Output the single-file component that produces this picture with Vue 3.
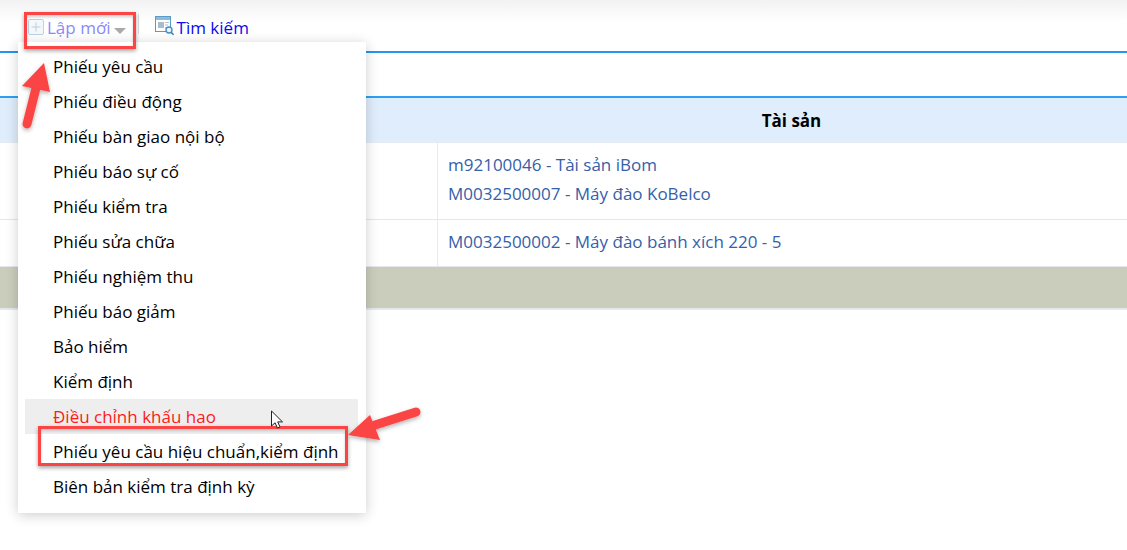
<script setup>
const items = [
  'Phiếu yêu cầu', 'Phiếu điều động', 'Phiếu bàn giao nội bộ', 'Phiếu báo sự cố',
  'Phiếu kiểm tra', 'Phiếu sửa chữa', 'Phiếu nghiệm thu', 'Phiếu báo giảm',
  'Bảo hiểm', 'Kiểm định', 'Điều chỉnh khấu hao', 'Phiếu yêu cầu hiệu chuẩn,kiểm định',
  'Biên bản kiểm tra định kỳ'
]
const hoverIndex = 10
</script>

<template>
  <div class="page">
    <div class="toolbar">
      <div class="new-btn">
        <svg class="plus" width="16" height="16" viewBox="0 0 16 16">
          <rect x="0.5" y="0.5" width="15" height="15" rx="1.5" fill="#f4f8fb" stroke="#bcd3e4" />
          <path d="M8 3.5v9M3.5 8h9" stroke="#bccfde" stroke-width="1" fill="none" />
        </svg>
        <span class="new-label">Lập mới</span>
        <span class="caret"></span>
      </div>
      <span class="sep"></span>
      <div class="search-btn">
        <svg width="20" height="20" viewBox="0 0 20 20">
          <rect x="0.5" y="0.5" width="15" height="15" fill="#fff" stroke="#5b9bc9" />
          <rect x="1" y="1" width="14" height="3" fill="#8dbbdc" />
          <rect x="3" y="6" width="6" height="6" fill="#a9bccb" />
          <path d="M10 6.5h4M10 9h3M10 11.5h2" stroke="#a9c4d8" />
          <circle cx="14" cy="14" r="3" fill="#eaf4fb" stroke="#4a8fc0" stroke-width="1.4" />
          <path d="M16 16.2l2.6 2.6" stroke="#3f7fae" stroke-width="1.6" />
        </svg>
        <span class="search-label">Tìm kiếm</span>
      </div>
    </div>

    <div class="tabline"></div>

    <div class="table">
      <div class="row head">
        <div class="cell first"></div>
        <div class="cell second">Tài sản</div>
      </div>
      <div class="row r1">
        <div class="cell first"></div>
        <div class="cell second links">
          <a>m92100046 - Tài sản iBom</a>
          <a>M0032500007 - Máy đào KoBelco</a>
        </div>
      </div>
      <div class="row r2">
        <div class="cell first"></div>
        <div class="cell second links">
          <a>M0032500002 - Máy đào bánh xích 220 - 5</a>
        </div>
      </div>
      <div class="footer-row"></div>
    </div>

    <ul class="menu">
      <li v-for="(item, i) in items" :key="item" :class="{ hover: i === hoverIndex }">{{ item }}</li>
    </ul>

    <div class="mark mark-top"></div>
    <div class="mark mark-item"></div>

    <svg class="cursor" width="16" height="20" viewBox="0 0 16 20">
      <path d="M1.5 1v15l3.6-3.2 2.3 5.2 2.6-1.1-2.3-5h4.8z" fill="#fff" stroke="#222" stroke-width="1" />
    </svg>

    <svg class="arrow arrow-up" width="60" height="100" viewBox="0 0 60 100">
      <defs>
        <filter id="sh1" x="-30%" y="-30%" width="160%" height="160%">
          <feDropShadow dx="0" dy="2" stdDeviation="2" flood-color="#000" flood-opacity="0.3" />
        </filter>
      </defs>
      <g filter="url(#sh1)">
        <path d="M27 84 L36 48" stroke="#fb4444" stroke-width="9" stroke-linecap="round" fill="none" />
        <path d="M44 23 L22 46 L50 52 Z" fill="#fb4444" />
      </g>
    </svg>

    <svg class="arrow arrow-left" width="90" height="60" viewBox="0 0 90 60">
      <defs>
        <filter id="sh2" x="-30%" y="-30%" width="160%" height="160%">
          <feDropShadow dx="0" dy="2" stdDeviation="2" flood-color="#000" flood-opacity="0.3" />
        </filter>
      </defs>
      <g filter="url(#sh2)">
        <path d="M76 14 L35 27" stroke="#fb4444" stroke-width="9" stroke-linecap="round" fill="none" />
        <path d="M8 37 L30 17 L40 42 Z" fill="#fb4444" />
      </g>
    </svg>
  </div>
</template>

<style>
body { margin: 0; background: #fff; }
</style>

<style scoped>
.page {
  position: relative;
  width: 1127px;
  height: 550px;
  overflow: hidden;
  background: #fff;
  font-family: "Open Sans", "Noto Sans", sans-serif;
  font-size: 17px;
}
.toolbar {
  height: 51px;
  box-sizing: border-box;
  display: flex;
  align-items: flex-start;
  padding: 16px 0 0 28px;
  background: linear-gradient(#f2f2f2 0, #fff 22px);
}
.new-btn { display: flex; align-items: center; height: 24px; }
.plus { margin-right: 3px; margin-top: -3px; }
.new-label { color: #8a8af8; line-height: 24px; }
.caret {
  width: 0; height: 0;
  margin: 5px 0 0 3px;
  border-left: 6px solid transparent;
  border-right: 6px solid transparent;
  border-top: 6px solid #aaa;
}
.sep { width: 1px; height: 20px; background: #dcdcdc; margin: -2px 0 0 12px; }
.search-btn { display: flex; align-items: center; height: 24px; margin-left: 16px; }
.search-btn svg { margin-top: -4px; margin-right: 2px; }
.search-label { color: #0a0af0; line-height: 24px; }
.tabline { height: 2px; background: #2196f3; }
.table { margin-top: 43px; }
.row { display: grid; grid-template-columns: 437px 1fr; }
.cell.second { border-left: 1px solid #e6ebf0; box-sizing: border-box; }
.head {
  height: 47px;
  box-sizing: border-box;
  background: #e0edfc;
  border-top: 2px solid #2ba0f5;
  border-bottom: 1px solid #e4ebf2;
}
.head .second {
  display: flex; align-items: center; justify-content: center;
  font-weight: 700; color: #000;
  padding-left: 18px;
}
.links {
  display: flex; flex-direction: column; justify-content: center;
  padding-left: 10px;
  padding-bottom: 4px;
  color: #3560a8;
  line-height: 29px;
}
.r1 { height: 77px; box-sizing: border-box; border-bottom: 1px solid #e4e8ec; }
.r2 { height: 47px; box-sizing: border-box; border-bottom: 1px solid #e4e8ec; }
.footer-row {
  height: 43px;
  box-sizing: border-box;
  background: #cbcdbc;
  border-bottom: 2px solid #e3e9ec;
}
.menu {
  position: absolute;
  left: 18px; top: 42px;
  width: 348px;
  height: 471px;
  box-sizing: border-box;
  margin: 0;
  padding: 7px 8px 0 7px;
  list-style: none;
  background: #fff;
  box-shadow: 0 2px 12px rgba(0, 0, 0, 0.2);
}
.menu li {
  height: 35px;
  line-height: 36px;
  padding-left: 28px;
  color: #000;
  white-space: nowrap;
}
.menu li.hover { background: #eeeeee; color: #ff1a1a; }
.mark {
  position: absolute;
  box-sizing: border-box;
  border: 3px solid #fb4444;
  box-shadow: 0 2px 4px rgba(0, 0, 0, 0.35), inset 0 2px 3px rgba(0, 0, 0, 0.18);
}
.mark-top { left: 24px; top: 12px; width: 112px; height: 37px; }
.mark-item { left: 38px; top: 426px; width: 310px; height: 40px; }
.cursor { position: absolute; left: 270px; top: 410px; }
.arrow { position: absolute; }
.arrow-up { left: 0; top: 40px; }
.arrow-left { left: 340px; top: 398px; }
</style>
